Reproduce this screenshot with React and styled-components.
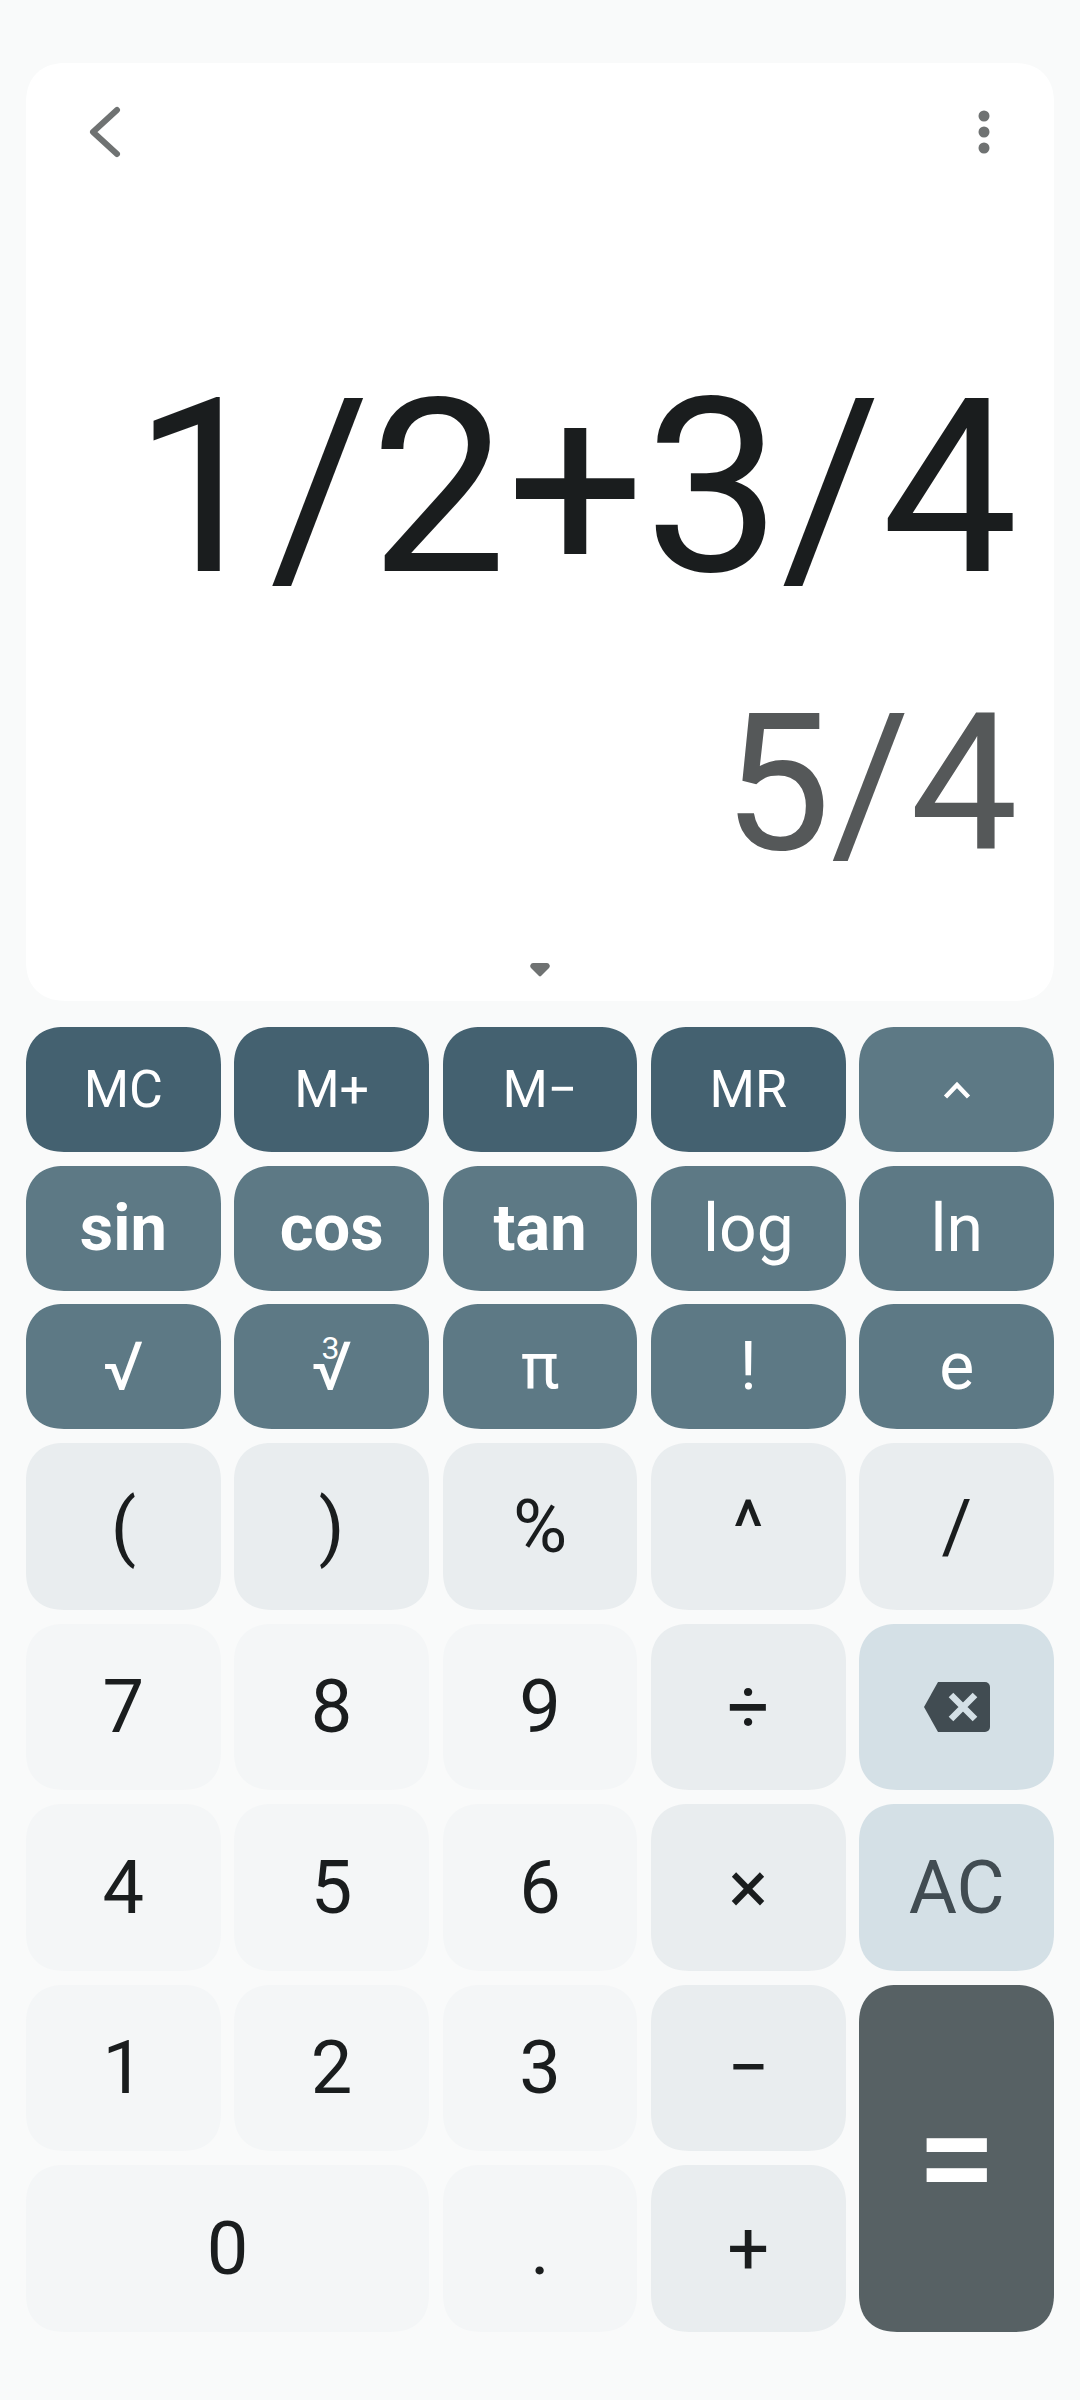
import React from "react"
import styled, { createGlobalStyle } from "styled-components"

const GlobalStyle = createGlobalStyle`
  html, body {
    margin: 0;
    padding: 0;
    background: #f9fafa;
  }
  body {
    font-family: Roboto, "Liberation Sans", sans-serif;
  }
`

const keyColors = {
  memory: { bg: "#446170", fg: "#ffffff" },
  science: { bg: "#5d7985", fg: "#ffffff" },
  operator: { bg: "#e9edef", fg: "#1a1d1e" },
  digit: { bg: "#f4f6f7", fg: "#1a1d1e" },
  clear: { bg: "#d4e0e6", fg: "#414c52" },
  equals: { bg: "#576164", fg: "#ffffff" },
}

const Page = styled.div`
  width: 1080px;
  height: 2400px;
  box-sizing: border-box;
  padding: 63px 26px 0;
  display: flex;
  flex-direction: column;
  gap: 26px;
  overflow: hidden;
`

const Display = styled.section`
  height: 938px;
  box-sizing: border-box;
  background: #ffffff;
  border-radius: 40px;
  corner-shape: superellipse(1.2);
  padding-top: 44px;
  display: flex;
  flex-direction: column;
`

const TopBar = styled.div`
  display: flex;
  justify-content: space-between;
  align-items: center;
  height: 50px;
  padding: 0 64px 0 62px;
`

const IconButton = styled.button`
  border: none;
  background: none;
  padding: 0;
  display: flex;
  line-height: 0;
`

const Expression = styled.div`
  margin-top: 189px;
  padding-right: 36px;
  font-size: 243px;
  line-height: 284px;
  color: #1a1d1e;
  text-align: right;
  white-space: nowrap;
`

const Result = styled.div`
  margin-top: 41px;
  padding-right: 36px;
  font-size: 192px;
  line-height: 225px;
  color: #555859;
  text-align: right;
  white-space: nowrap;
`

const Handle = styled.div`
  margin-top: auto;
  margin-bottom: 24px;
  align-self: center;
  display: flex;
`

const Keypad = styled.div`
  display: grid;
  grid-template-columns: repeat(5, 1fr);
  grid-template-rows: repeat(3, 125px) repeat(5, 166.8px);
  gap: 13.7px;
`

const Key = styled.button`
  border: none;
  padding: 0;
  border-radius: 38px;
  corner-shape: superellipse(1.2);
  background: ${(p) => keyColors[p.$kind].bg};
  color: ${(p) => keyColors[p.$kind].fg};
  font-family: inherit;
  font-size: ${(p) => p.$size || 74}px;
  font-weight: ${(p) => p.$weight || 400};
  grid-column: ${(p) => (p.$wide ? "span 2" : "auto")};
  grid-row: ${(p) => (p.$tall ? "span 2" : "auto")};
  display: flex;
  align-items: center;
  justify-content: center;
`

const CubeRoot = styled.span`
  position: relative;
  display: inline-block;
  line-height: 1;
`

const RootIndex = styled.span`
  position: absolute;
  top: -1px;
  left: 10px;
  font-size: 32px;
  line-height: 1;
`

const scienceKeys = [
  { label: "MC", kind: "memory", size: 52 },
  { label: "M+", kind: "memory", size: 52 },
  { label: "M−", kind: "memory", size: 52 },
  { label: "MR", kind: "memory", size: 52 },
  { label: "up", kind: "science" },
  { label: "sin", kind: "science", size: 65, weight: 700 },
  { label: "cos", kind: "science", size: 65, weight: 700 },
  { label: "tan", kind: "science", size: 65, weight: 700 },
  { label: "log", kind: "science", size: 66 },
  { label: "ln", kind: "science", size: 66 },
  { label: "√", kind: "science", size: 68 },
  { label: "cbrt", kind: "science", size: 68 },
  { label: "π", kind: "science", size: 64 },
  { label: "!", kind: "science", size: 66 },
  { label: "e", kind: "science", size: 66 },
]

const mainKeys = [
  { label: "(", kind: "operator" },
  { label: ")", kind: "operator" },
  { label: "%", kind: "operator" },
  { label: "^", kind: "operator" },
  { label: "/", kind: "operator" },
  { label: "7", kind: "digit" },
  { label: "8", kind: "digit" },
  { label: "9", kind: "digit" },
  { label: "÷", kind: "operator" },
  { label: "back", kind: "clear" },
  { label: "4", kind: "digit" },
  { label: "5", kind: "digit" },
  { label: "6", kind: "digit" },
  { label: "×", kind: "operator" },
  { label: "AC", kind: "clear" },
  { label: "1", kind: "digit" },
  { label: "2", kind: "digit" },
  { label: "3", kind: "digit" },
  { label: "−", kind: "operator" },
  { label: "=", kind: "equals", tall: true, size: 142, weight: 500 },
  { label: "0", kind: "digit", wide: true },
  { label: ".", kind: "digit" },
  { label: "+", kind: "operator" },
]

const BackspaceIcon = () => (
  <svg width="66" height="50" viewBox="0 0 66 50">
    <path d="M14 0H61a5 5 0 0 1 5 5V45a5 5 0 0 1-5 5H14L0 25Z" fill="#414c52" />
    <path
      d="M27 13 L51 37 M51 13 L27 37"
      stroke="#d4e0e6"
      strokeWidth="6.5"
      fill="none"
    />
  </svg>
)

const ChevronUpIcon = () => (
  <svg width="28" height="18" viewBox="0 0 28 18">
    <path d="M2.5 16 L14 4 L25.5 16" stroke="#ffffff" strokeWidth="4.5" fill="none" />
  </svg>
)

const keyContent = (label) => {
  if (label === "back") return <BackspaceIcon />
  if (label === "up") return <ChevronUpIcon />
  if (label === "cbrt")
    return (
      <CubeRoot>
        <RootIndex>3</RootIndex>√
      </CubeRoot>
    )
  return label
}

const App = () => (
  <Page>
    <GlobalStyle />
    <Display>
      <TopBar>
        <IconButton aria-label="Back">
          <svg width="34" height="52" viewBox="0 0 34 52">
            <path
              d="M29 4 L5 26 L29 48"
              stroke="#6f7272"
              strokeWidth="6"
              strokeLinecap="round"
              strokeLinejoin="round"
              fill="none"
            />
          </svg>
        </IconButton>
        <IconButton aria-label="More">
          <svg width="12" height="44" viewBox="0 0 12 44">
            <circle cx="6" cy="6" r="5.5" fill="#6f7272" />
            <circle cx="6" cy="22" r="5.5" fill="#6f7272" />
            <circle cx="6" cy="38" r="5.5" fill="#6f7272" />
          </svg>
        </IconButton>
      </TopBar>
      <Expression>1/2+3/4</Expression>
      <Result>5/4</Result>
      <Handle>
        <svg width="20" height="14" viewBox="0 0 20 14">
          <path d="M3 0H17a3 3 0 0 1 2 5L11 13a1.5 1.5 0 0 1-2 0L1 5a3 3 0 0 1 2-5Z" fill="#6f7272" />
        </svg>
      </Handle>
    </Display>
    <Keypad>
      {[...scienceKeys, ...mainKeys].map((k) => (
        <Key
          key={k.label}
          $kind={k.kind}
          $size={k.size}
          $weight={k.weight}
          $wide={k.wide}
          $tall={k.tall}
        >
          {keyContent(k.label)}
        </Key>
      ))}
    </Keypad>
  </Page>
)

export default App
